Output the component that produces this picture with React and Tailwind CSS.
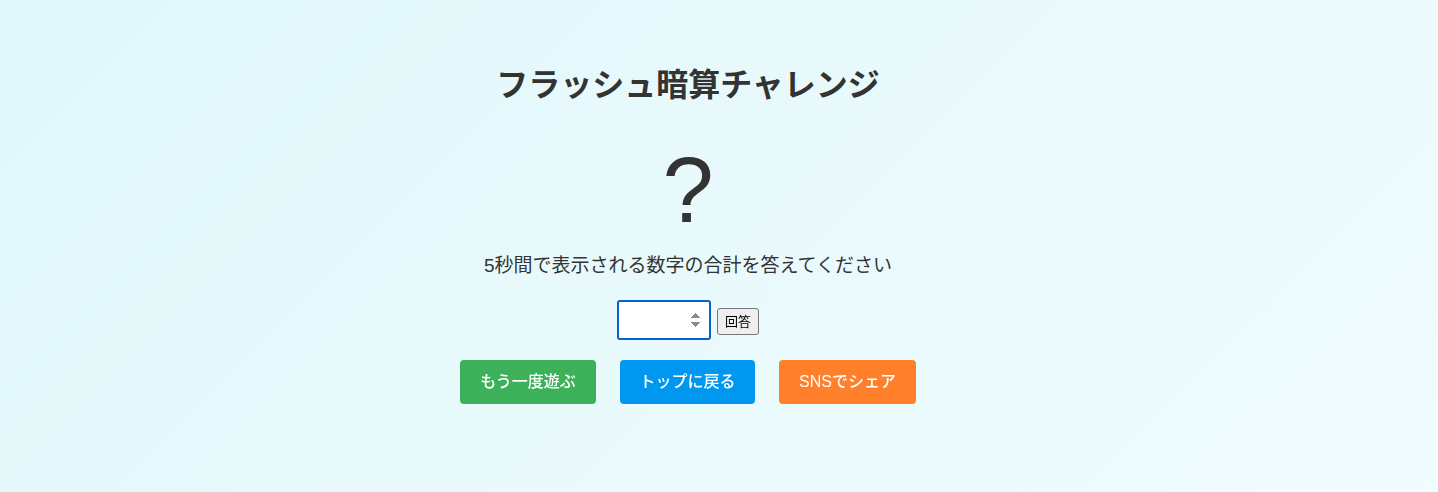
export default function App() {
  return (
    <div className="min-h-[492px] w-full bg-[linear-gradient(135deg,#e0f7fa,#f1fcfe)] font-['Liberation_Sans','Noto_Sans_CJK_JP',sans-serif] text-[#333]">
      <div className="flex flex-col items-center pr-[62px] pt-[65px]">
        <h1 className="text-[32px] font-bold leading-[40px]">フラッシュ暗算チャレンジ</h1>
        <div className="mt-[35px] text-[92px] leading-[100px]">?</div>
        <p className="mt-[13px] text-[19px] leading-[26px]">5秒間で表示される数字の合計を答えてください</p>
        <div className="mt-[21px] flex items-center gap-[6px]">
          <input
            type="number"
            autoFocus
            className="h-[40px] w-[94px] rounded-[3px] border-2 border-[#0a5fd0] bg-white px-[6px] text-[16px] caret-black outline-none"
          />
          <button className="mt-[3px] h-[27px] rounded-[3px] border border-[#767676] bg-[#efefef] px-[7px] text-[13px] text-black">回答</button>
        </div>
        <div className="mt-[20px] flex gap-[24px]">
          <button className="h-[44px] w-[136px] rounded-[4px] bg-[#3cb15a] text-[16px] font-medium text-white">もう一度遊ぶ</button>
          <button className="h-[44px] w-[135px] rounded-[4px] bg-[#0097f0] text-[16px] font-medium text-white">トップに戻る</button>
          <button className="h-[44px] w-[137px] rounded-[4px] bg-[#ff7f2a] text-[16px] font-medium text-white">SNSでシェア</button>
        </div>
      </div>
    </div>
  );
}
